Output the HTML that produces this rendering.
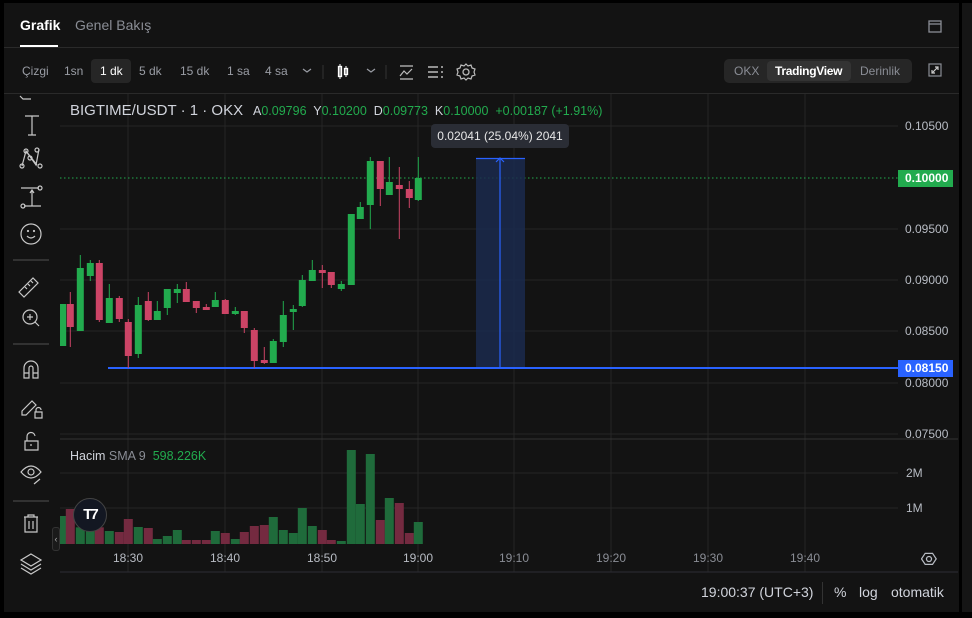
<!DOCTYPE html>
<html><head><meta charset="utf-8"><style>
*{margin:0;padding:0;box-sizing:border-box}
body{width:972px;height:618px;background:#000;font-family:"Liberation Sans",sans-serif;position:relative;overflow:hidden;color:#d1d4dc}
.a{position:absolute;white-space:nowrap}
.z{z-index:5}
</style></head><body>
<div class="a" style="left:4px;top:3px;width:955px;height:609px;background:#131313"></div>
<div class="a" style="left:962px;top:3px;width:10px;height:609px;background:#151515"></div>
<!-- tabs -->
<div class="a" style="left:20px;top:17px;font-size:14px;color:#fff;font-weight:bold">Grafik</div>
<div class="a" style="left:75px;top:17px;font-size:14px;color:#8a8d95">Genel Bakış</div>
<div class="a" style="left:20px;top:45px;width:38px;height:2px;background:#fff"></div>
<div class="a" style="left:4px;top:47px;width:955px;height:1px;background:#2a2a2a"></div>
<svg class="a" style="left:928px;top:20px" width="14" height="13"><rect x="1" y="1" width="12" height="11" fill="none" stroke="#8a8d95" stroke-width="1.3"/><line x1="1" y1="4" x2="13" y2="4" stroke="#8a8d95" stroke-width="1.3"/></svg>
<!-- toolbar -->
<div class="a" style="left:91px;top:59px;width:40px;height:24px;background:#262626;border-radius:4px"></div>
<div class="a" style="top:64px;font-size:12px;color:#9a9da5;left:22px">Çizgi</div>
<div class="a" style="top:64px;font-size:12px;color:#9a9da5;left:64px">1sn</div>
<div class="a" style="top:64px;font-size:12px;color:#fff;left:100px">1 dk</div>
<div class="a" style="top:64px;font-size:12px;color:#9a9da5;left:139px">5 dk</div>
<div class="a" style="top:64px;font-size:12px;color:#9a9da5;left:180px">15 dk</div>
<div class="a" style="top:64px;font-size:12px;color:#9a9da5;left:227px">1 sa</div>
<div class="a" style="top:64px;font-size:12px;color:#9a9da5;left:265px">4 sa</div>
<svg class="a" style="left:300px;top:60px" width="180" height="24">
<path d="M3 9l4 3 4-3" fill="none" stroke="#9a9da5" stroke-width="1.2"/>
<line x1="23" y1="5" x2="23" y2="19" stroke="#333"/>
<rect x="38.5" y="6.5" width="3" height="10" fill="none" stroke="#fff" stroke-width="1.3"/><line x1="40" y1="4" x2="40" y2="19" stroke="#fff"/>
<rect x="44.5" y="8.5" width="3" height="6" fill="none" stroke="#fff" stroke-width="1.3"/><line x1="46" y1="6" x2="46" y2="17" stroke="#fff"/>
<path d="M67 9l4 3 4-3" fill="none" stroke="#9a9da5" stroke-width="1.2"/>
<line x1="86" y1="5" x2="86" y2="19" stroke="#333"/>
<path d="M100 16l4-5 3 3 5-5" fill="none" stroke="#bbb" stroke-width="1.2"/><line x1="100" y1="19" x2="113" y2="19" stroke="#bbb" stroke-width="1.3"/><line x1="100" y1="6" x2="113" y2="6" stroke="#bbb" stroke-width="1.3"/>
<path d="M128 7h10M128 12h10M128 17h10M141 7h2M141 12h2M141 17h2" stroke="#bbb" stroke-width="1.6"/>
<circle cx="166" cy="12" r="3" fill="none" stroke="#bbb" stroke-width="1.3"/><path d="M166 4l2 2 3-1 1 3 3 1-1 3 1 3-3 1-1 3-3-1-2 2-2-2-3 1-1-3-3-1 1-3-1-3 3-1 1-3 3 1z" fill="none" stroke="#bbb" stroke-width="1.2"/>
</svg>
<div class="a" style="left:724px;top:59px;width:188px;height:24px;background:#262626;border-radius:5px"></div>
<div class="a" style="left:767px;top:61px;width:84px;height:20px;background:#333;border-radius:4px"></div>
<div class="a" style="left:734px;top:64px;font-size:12px;color:#8a8d95">OKX</div>
<div class="a" style="left:775px;top:64px;font-size:12px;color:#fff;font-weight:bold;letter-spacing:-0.3px">TradingView</div>
<div class="a" style="left:860px;top:64px;font-size:12px;color:#8a8d95">Derinlik</div>
<svg class="a" style="left:928px;top:63px" width="14" height="14"><rect x="1" y="1" width="12" height="12" fill="none" stroke="#8a8d95" stroke-width="1.2"/><path d="M4 10l6-6M7 4h3v3M4 7v3h3" fill="none" stroke="#ccc" stroke-width="1.2"/></svg>
<div class="a" style="left:4px;top:93px;width:955px;height:1px;background:#2a2a2a"></div>
<!-- chart -->
<svg class="a" style="left:0;top:0" width="972" height="618">
<g stroke="#262626" stroke-width="1">
<line x1="128" y1="94" x2="128" y2="572"/><line x1="225" y1="94" x2="225" y2="572"/><line x1="322" y1="94" x2="322" y2="572"/><line x1="418" y1="94" x2="418" y2="572"/><line x1="514" y1="94" x2="514" y2="572"/><line x1="611" y1="94" x2="611" y2="572"/><line x1="708" y1="94" x2="708" y2="572"/><line x1="805" y1="94" x2="805" y2="572"/>
<line x1="60" y1="126" x2="898" y2="126"/><line x1="60" y1="229" x2="898" y2="229"/><line x1="60" y1="280" x2="898" y2="280"/><line x1="60" y1="331" x2="898" y2="331"/><line x1="60" y1="383" x2="898" y2="383"/><line x1="60" y1="434" x2="898" y2="434"/>
<line x1="60" y1="473" x2="898" y2="473"/><line x1="60" y1="508" x2="898" y2="508"/>
</g>
<line x1="60" y1="439" x2="958" y2="439" stroke="#333"/>
<line x1="60" y1="572" x2="958" y2="572" stroke="#2c2c34"/>
<line x1="60" y1="178" x2="898" y2="178" stroke="#22ab4e" stroke-dasharray="1.5 2.5"/>
<rect x="476" y="158" width="49" height="210" fill="#1b2a4e" opacity=".85"/>
<line x1="476" y1="158.5" x2="525" y2="158.5" stroke="#2962ff" stroke-width="1.2"/>
<line x1="500" y1="158" x2="500" y2="368" stroke="#2962ff" stroke-width="1.2"/>
<path d="M496 162l4-4 4 4" fill="none" stroke="#2962ff" stroke-width="1.2"/>
<line x1="108" y1="368" x2="898" y2="368" stroke="#2962ff" stroke-width="2"/>
</svg>
<svg class="a" style="left:0;top:0" width="972" height="618" id="cs"></svg>
<script>
var C=[[62.7,'G',304,346,304,346],[70.3,'R',304,327,292,347],[80.3,'G',268,331,255,331],[90.3,'G',263,276,260,281],[99.3,'R',263,320,260,322],[109.3,'G',298,323,284,323],[119.3,'R',298,319,296,322],[128.3,'R',322,356,319,368],[138.3,'G',305,354,297,358],[148.3,'R',301,320,292,321],[157.3,'G',311,320,301,320],[167.3,'G',289,308,289,315],[177.3,'G',289,293,284,303],[186.3,'R',289,302,282,302],[196.3,'R',301,308,301,313],[206.3,'R',307,310,304,310],[215.3,'G',300,307,292,307],[225.3,'R',300,314,299,314],[235.3,'G',311,314,307,315],[244.3,'R',311,328,311,333],[254.3,'R',330,361,328,368],[264.3,'R',360,363,347,364],[273.3,'G',341,363,339,363],[283.3,'G',315,342,301,347],[293.3,'G',309,312,305,330],[302.3,'G',280,306,275,307],[312.3,'G',270,281,260,281],[322.3,'R',270,273,265,288],[331.3,'R',272,285,272,288],[341.3,'G',284,289,281,291],[351.3,'G',214,285,214,285],[360.3,'G',207,219,202,219],[370.3,'G',161,205,157,229],[380.3,'R',161,189,161,206],[389.3,'G',182,195,157,195],[399.3,'R',185,189,167,239],[409.3,'R',189,198,181,208],[418.3,'G',178,200,157,201]];
var V=[228,207,262,262,262,273,276,237,261,264,297,288,270,300,300,300,273,279,297,276,258,255,231,270,279,204,258,270,300,303,30,192,42,240,174,189,279,246];
var s='';
C.forEach(function(c,i){var col=c[1]=='G'?'#22ab4e':'#cc4466';var vc=c[1]=='G'?'#1f6b3b':'#742a40';
var vt=440+V[i]/3;s+='<rect x="'+(c[0]-4.5)+'" y="'+vt+'" width="9" height="'+(544-vt)+'" fill="'+vc+'"/>';
s+='<line x1="'+c[0]+'" y1="'+c[4]+'" x2="'+c[0]+'" y2="'+c[5]+'" stroke="'+col+'" stroke-width="1"/>';
s+='<rect x="'+(c[0]-3.5)+'" y="'+c[2]+'" width="7" height="'+Math.max(2,c[3]-c[2])+'" fill="'+col+'"/>';});
s+='<rect x="4" y="94" width="56" height="478" fill="#131313"/>';
document.getElementById('cs').innerHTML=s;
</script>
<!-- left toolbar -->
<svg class="a z" style="left:12px;top:94px" width="40" height="500" fill="none" stroke="#c8c8c8" stroke-width="1.2">
<path d="M8 2l3 3h8"/>
<path d="M13 22h14M20 22v19M16 41h8"/>
<path d="M10 72l4-15 10 14 3-16M14 57l11 14" /><circle cx="10" cy="72" r="2"/><circle cx="14" cy="57" r="2"/><circle cx="25" cy="56" r="2"/><circle cx="28" cy="72" r="2"/><circle cx="18" cy="64" r="2"/>
<path d="M9 94h18M12 112h17M20 112V96M18 99l2-3 2 3"/><circle cx="28" cy="94" r="2"/><circle cx="11" cy="112" r="2"/>
<circle cx="19" cy="140" r="10"/><path d="M15 142q4 4 8 0"/><circle cx="16" cy="137" r=".5"/><circle cx="22" cy="137" r=".5"/>
<line x1="1" y1="166" x2="37" y2="166" stroke="#444"/>
<path d="M7 198l14-14 5 5-14 14z M13 193l2 2M16 190l2 2M19 187l2 2"/>
<circle cx="18" cy="223" r="7"/><path d="M15 223h6M18 220v6M23 228l4 4"/>
<line x1="1" y1="250" x2="37" y2="250" stroke="#444"/>
<path d="M12 284v-10a7 7 0 0 1 14 0v10h-5v-10a2 2 0 0 0-4 0v10z M12 279h5M21 279h5"/>
<path d="M10 317l10-10 4 4-10 10h-4z M23 318h7v6h-7z M24 318v-2a2.5 2.5 0 0 1 5 0"/>
<path d="M13 347h13v9h-13z M15 347v-4a4 4 0 0 1 8-1 M19 350v2"/>
<path d="M9 378q10-12 20 0q-10 12-20 0z"/><circle cx="19" cy="378" r="3"/><path d="M22 390l6-5"/>
<line x1="1" y1="407" x2="37" y2="407" stroke="#444"/>
<path d="M12 423h14M16 423v-2h6v2M13 423v15h12v-15M17 427v8M21 427v8"/>
<path d="M19 460l10 6-10 6-10-6z M9 470l10 6 10-6 M9 474l10 6 10-6"/>
</svg>
<div class="a z" style="left:52px;top:527px;width:8px;height:24px;border:1px solid #333;border-radius:3px;background:#1a1a1a;font-size:9px;color:#aaa;text-align:center;line-height:22px">‹</div>
<div class="a z" style="left:73px;top:498px;width:34px;height:34px;border-radius:50%;background:#131722;border:1px solid #444;color:#fff;font-weight:bold;font-size:15px;text-align:center;line-height:31px;letter-spacing:-2px">T7</div>
<!-- legend -->
<div class="a" style="left:70px;top:102px;font-size:15px;color:#d1d4dc">BIGTIME/USDT · 1 · OKX</div>
<div class="a" style="left:253px;top:104px;font-size:12.5px;color:#d1d4dc">A<span style="color:#22ab4e">0.09796</span>&nbsp; Y<span style="color:#22ab4e">0.10200</span>&nbsp; D<span style="color:#22ab4e">0.09773</span>&nbsp; K<span style="color:#22ab4e">0.10000&nbsp; +0.00187 (+1.91%)</span></div>
<div class="a" style="left:431px;top:124px;width:138px;height:24px;background:#2a2d35;border-radius:4px;font-size:12px;color:#e6e6e6;text-align:center;line-height:24px">0.02041 (25.04%) 2041</div>
<div class="a" style="left:70px;top:449px;font-size:12.5px;color:#d1d4dc">Hacim <span style="color:#8a8d95">SMA 9</span>&nbsp; <span style="color:#22ab4e">598.226K</span></div>
<!-- price axis -->
<div class="a" style="left:905px;top:119px;font-size:12px;color:#b8bcc4">0.10500</div>
<div class="a" style="left:898px;top:170px;width:55px;height:17px;background:#22ab4e;font-size:12px;color:#fff;font-weight:bold;line-height:17px;padding-left:7px">0.10000</div>
<div class="a" style="left:905px;top:222px;font-size:12px;color:#b8bcc4">0.09500</div>
<div class="a" style="left:905px;top:273px;font-size:12px;color:#b8bcc4">0.09000</div>
<div class="a" style="left:905px;top:324px;font-size:12px;color:#b8bcc4">0.08500</div>
<div class="a" style="left:905px;top:376px;font-size:12px;color:#b8bcc4">0.08000</div>
<div class="a" style="left:898px;top:360px;width:55px;height:17px;background:#2962ff;font-size:12px;color:#fff;font-weight:bold;line-height:17px;padding-left:7px">0.08150</div>
<div class="a" style="left:905px;top:427px;font-size:12px;color:#b8bcc4">0.07500</div>
<div class="a" style="left:906px;top:466px;font-size:12px;color:#b8bcc4">2M</div>
<div class="a" style="left:906px;top:501px;font-size:12px;color:#b8bcc4">1M</div>
<!-- time axis -->
<div class="a" style="left:113px;top:551px;font-size:12px;color:#b8bcc4">18:30</div>
<div class="a" style="left:210px;top:551px;font-size:12px;color:#b8bcc4">18:40</div>
<div class="a" style="left:307px;top:551px;font-size:12px;color:#b8bcc4">18:50</div>
<div class="a" style="left:403px;top:551px;font-size:12px;color:#b8bcc4">19:00</div>
<div class="a" style="left:499px;top:551px;font-size:12px;color:#8a8d95">19:10</div>
<div class="a" style="left:596px;top:551px;font-size:12px;color:#8a8d95">19:20</div>
<div class="a" style="left:693px;top:551px;font-size:12px;color:#8a8d95">19:30</div>
<div class="a" style="left:790px;top:551px;font-size:12px;color:#8a8d95">19:40</div>
<svg class="a" style="left:921px;top:551px" width="16" height="16"><path d="M4 2h8l4 6-4 6H4L0 8z" transform="translate(0.5 0.5) scale(.92)" fill="none" stroke="#b8bcc4" stroke-width="1.3"/><circle cx="8" cy="8" r="2.5" fill="none" stroke="#b8bcc4" stroke-width="1.3"/></svg>
<!-- bottom -->
<div class="a" style="left:701px;top:584px;font-size:14px;color:#d1d4dc">19:00:37 (UTC+3)</div>
<div class="a" style="left:822px;top:582px;width:1px;height:22px;background:#333"></div>
<div class="a" style="left:834px;top:584px;font-size:14px;color:#d1d4dc">%</div>
<div class="a" style="left:859px;top:584px;font-size:14px;color:#d1d4dc">log</div>
<div class="a" style="left:891px;top:584px;font-size:14px;color:#d1d4dc">otomatik</div>
</body></html>
